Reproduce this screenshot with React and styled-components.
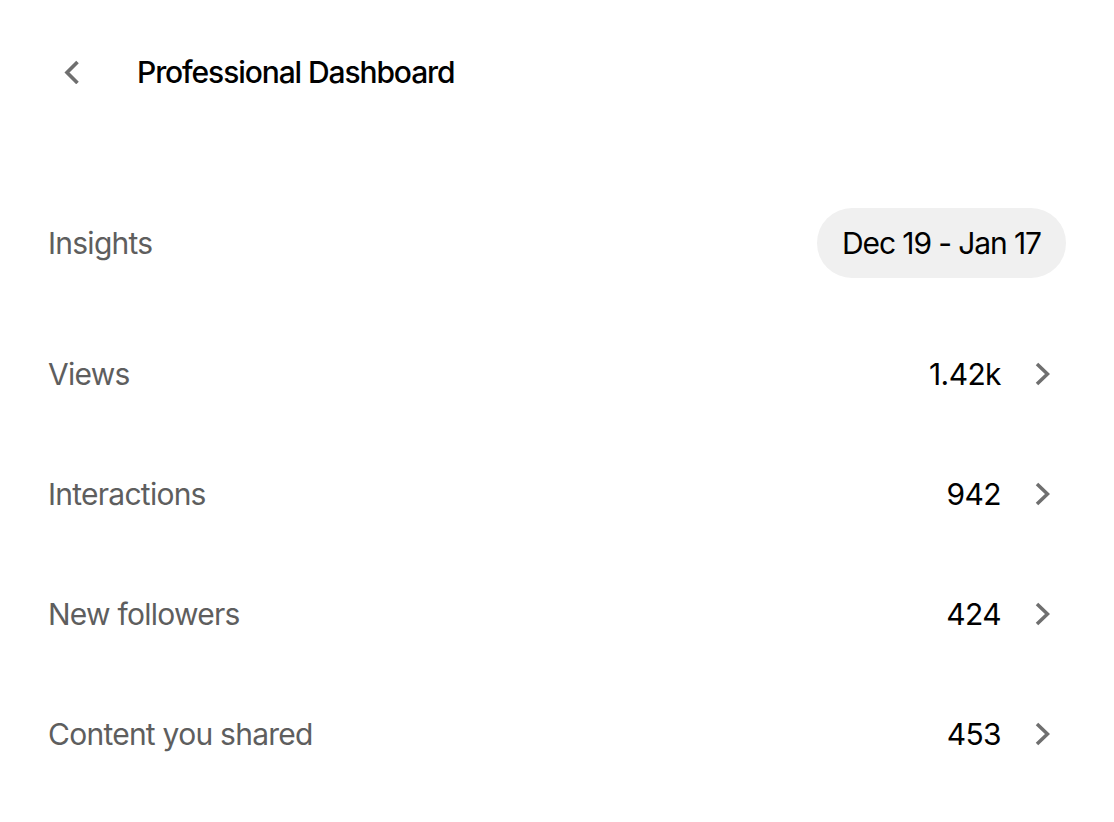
import React from "react";
import styled, { createGlobalStyle } from "styled-components";

const Global = createGlobalStyle`
  html, body { margin: 0; padding: 0; background: #fff; }
  body { font-family: Inter, "Noto Sans", sans-serif; -webkit-font-smoothing: antialiased; }
`;

const Page = styled.div`
  width: 1114px;
  padding: 0 48px;
  box-sizing: border-box;
`;

const Header = styled.header`
  height: 144px;
  display: flex;
  align-items: center;
`;

const BackButton = styled.button`
  border: 0;
  background: none;
  padding: 0;
  margin-left: 15px;
  width: 17px;
  height: 26px;
  display: flex;
  align-items: center;
  justify-content: center;
  cursor: pointer;
`;

const Title = styled.h1`
  margin: 0 0 0 57px;
  font-size: 30px;
  font-weight: 500;
  letter-spacing: -1.1px;
  color: #000;
`;

const Section = styled.section`
  padding-top: 28px;
`;

const InsightsRow = styled.div`
  height: 142px;
  display: flex;
  align-items: center;
  justify-content: space-between;
`;

const Label = styled.span`
  font-size: 30px;
  font-weight: 400;
  letter-spacing: -0.75px;
  color: #5e5e5e;
`;

const Pill = styled.button`
  height: 70px;
  padding: 0 25px;
  border: 0;
  border-radius: 35px;
  background: #f0f0f0;
  font-family: inherit;
  font-size: 30px;
  font-weight: 400;
  letter-spacing: -1.1px;
  color: #000;
`;

const Row = styled.div`
  height: 120px;
  display: flex;
  align-items: center;
`;

const Value = styled.span`
  margin-left: auto;
  font-size: 30px;
  font-weight: 400;
  letter-spacing: -0.6px;
  color: #000;
`;

const Arrow = styled.span`
  display: flex;
  margin-left: 33px;
  margin-right: 16px;
`;

const Chevron = ({ dir = "right" }) => (
  <svg width="16" height="24" viewBox="0 0 16 24" fill="none">
    <polyline
      points={dir === "right" ? "3,2 13.5,12 3,22" : "13.5,2 3,12.5 13.5,23"}
      stroke="#6f6f6f"
      strokeWidth="3.6"
      strokeLinecap="butt"
      strokeLinejoin="miter"
    />
  </svg>
);

const rows = [
  { label: "Views", value: "1.42k" },
  { label: "Interactions", value: "942" },
  { label: "New followers", value: "424" },
  { label: "Content you shared", value: "453" },
];

export default function App() {
  return (
    <>
      <Global />
      <Page>
        <Header>
          <BackButton aria-label="Back">
            <Chevron dir="left" />
          </BackButton>
          <Title>Professional Dashboard</Title>
        </Header>
        <Section>
          <InsightsRow>
            <Label>Insights</Label>
            <Pill>Dec 19 - Jan 17</Pill>
          </InsightsRow>
          {rows.map((r) => (
            <Row key={r.label}>
              <Label>{r.label}</Label>
              <Value>{r.value}</Value>
              <Arrow>
                <Chevron />
              </Arrow>
            </Row>
          ))}
        </Section>
      </Page>
    </>
  );
}
